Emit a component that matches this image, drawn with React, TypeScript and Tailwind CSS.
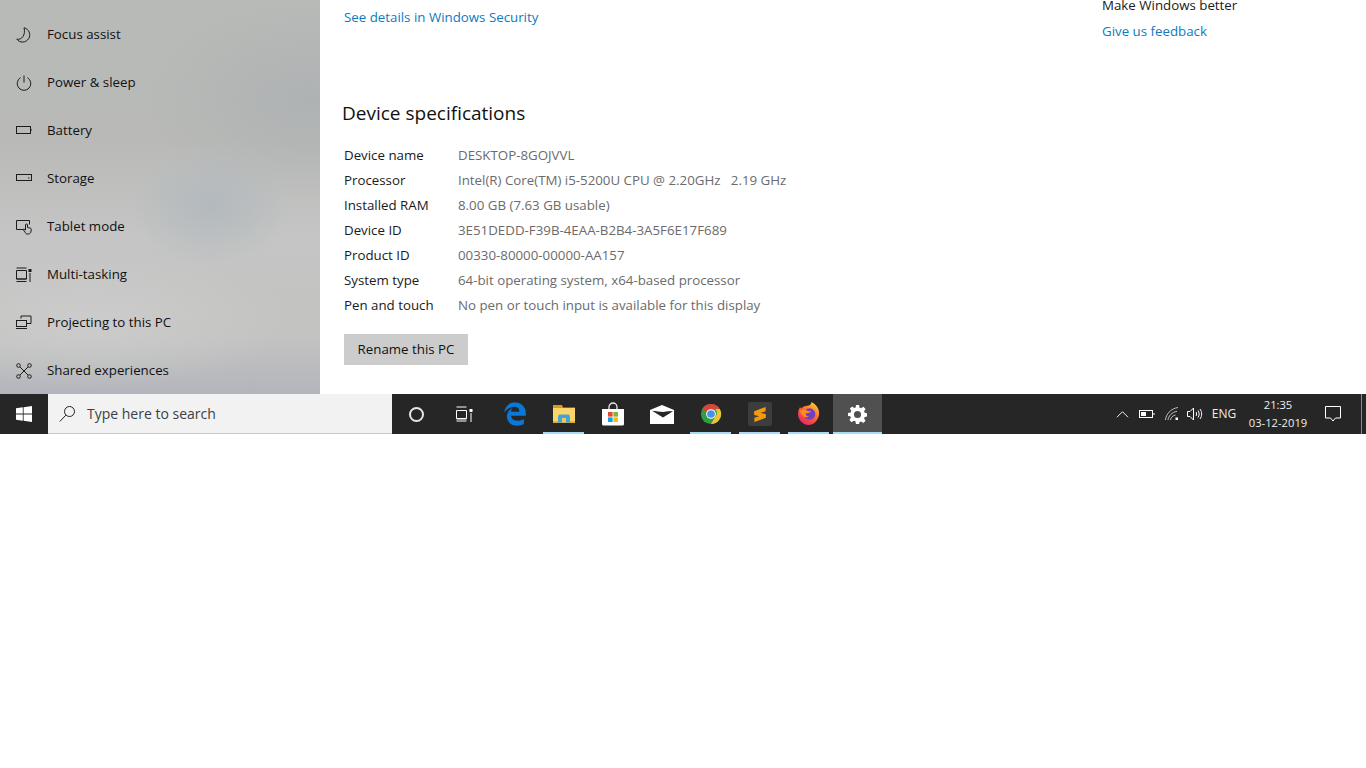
import { type ReactNode } from "react";
import { FaEdgeLegacy } from "react-icons/fa6";

const font = "font-['Open_Sans','Noto_Sans',sans-serif]";

const NavIcons: Record<string, ReactNode> = {
  focus: <path d="M8 0.800A7.200 7.200 0 1 1 0.800 12.200C5.500 13.300 10 8 8 0.800z" />,
  power: (
    <>
      <path d="M4.500 2.700a6.800 6.800 0 1 0 7 0" />
      <path d="M8 0.500v7" />
    </>
  ),
  battery: (
    <>
      <rect x="0.500" y="3.500" width="14" height="7" />
      <path d="M15 6v2" />
    </>
  ),
  storage: (
    <>
      <rect x="0.500" y="3.500" width="15" height="6" />
      <path d="M12 7h1.500" />
    </>
  ),
  tablet: (
    <>
      <path d="M7 10.500H0.500v-9h13v4" />
      <path d="M9 13l-2-2.500 1-.5 1.500 1V6a1 1 0 0 1 2 0v2.500l3 .7c.6.2.9.7.8 1.300l-.5 2.700c-.4 1.200-1.400 1.800-2.600 1.800h-1.200C9.900 15 9.500 14 9 13z" />
    </>
  ),
  multi: (
    <>
      <path d="M0.500 1h10M0.500 14.500h10M0.500 12h10M0.500 3.500h10v8.500h-10z" />
      <path d="M14 6v9" />
      <rect x="13" y="2.500" width="2" height="2" fill="currentColor" />
    </>
  ),
  project: (
    <>
      <path d="M5 3.500V1h10v7.500h-4.500" />
      <rect x="0.500" y="5.500" width="10" height="6" />
      <path d="M0 13.500h11" />
    </>
  ),
  shared: (
    <>
      <circle cx="2.500" cy="2.500" r="1.800" />
      <circle cx="13.500" cy="2.500" r="1.800" />
      <circle cx="2.500" cy="13.500" r="1.800" />
      <circle cx="13.500" cy="13.500" r="1.800" />
      <path d="M4 4c2.500 2.500 5.500 5.500 8 8M12 4c-2.500 2.500-5.500 5.500-8 8" />
    </>
  ),
};

const navItems = [
  { key: "focus", label: "Focus assist" },
  { key: "power", label: "Power & sleep" },
  { key: "battery", label: "Battery" },
  { key: "storage", label: "Storage" },
  { key: "tablet", label: "Tablet mode" },
  { key: "multi", label: "Multi-tasking" },
  { key: "project", label: "Projecting to this PC" },
  { key: "shared", label: "Shared experiences" },
];

const specs = [
  ["Device name", "DESKTOP-8GOJVVL"],
  ["Processor", "Intel(R) Core(TM) i5-5200U CPU @ 2.20GHz   2.19 GHz"],
  ["Installed RAM", "8.00 GB (7.63 GB usable)"],
  ["Device ID", "3E51DEDD-F39B-4EAA-B2B4-3A5F6E17F689"],
  ["Product ID", "00330-80000-00000-AA157"],
  ["System type", "64-bit operating system, x64-based processor"],
  ["Pen and touch", "No pen or touch input is available for this display"],
];

function Sidebar() {
  return (
    <aside className="w-[320px] shrink-0 overflow-hidden pt-[11px] bg-[radial-gradient(ellipse_80px_60px_at_210px_205px,#b3b9be,transparent),radial-gradient(ellipse_170px_100px_at_310px_100px,#afb2b3,transparent),radial-gradient(ellipse_200px_70px_at_90px_320px,#cbcccb,transparent),linear-gradient(180deg,#b8bab8_0%,#b9bab7_35%,#c4c5c4_60%,#c3c3c1_85%,#b4b5bc_100%)]">
      {navItems.map((item) => (
        <div key={item.key} className="flex h-12 items-center pl-4">
          <svg viewBox="0 0 16 16" fill="none" stroke="currentColor" strokeWidth="1" className="h-4 w-4 text-[#1c1c1c]">
            {NavIcons[item.key]}
          </svg>
          <span className="ml-[15px] text-[13.300px] text-[#111]">{item.label}</span>
        </div>
      ))}
    </aside>
  );
}

function Content() {
  return (
    <main className="flex min-w-0 flex-1 overflow-hidden bg-white">
      <section className="flex-1 pl-6 pt-[7px]">
        <a className="block h-5 text-[13.300px] leading-5 text-[#0c7cc0]">See details in Windows Security</a>
        <h2 className="-ml-[2px] mt-[72px] h-7 text-[19px] leading-7 text-[#111]">Device specifications</h2>
        <dl className="mt-[16px]">
          {specs.map(([k, v]) => (
            <div key={k} className="flex h-[25px] items-center text-[13.300px]">
              <dt className="w-[114px] text-[#1a1a1a]">{k}</dt>
              <dd className="whitespace-pre text-[#6b6b6b]">{v}</dd>
            </div>
          ))}
        </dl>
        <button className="mt-[16px] flex h-[31px] w-[124px] items-center justify-center bg-[#cccccc] text-[13.300px] text-[#111]">
          Rename this PC
        </button>
      </section>
      <section className="-mt-[5px] w-[264px] shrink-0 text-[13.300px] leading-5">
        <p className="text-[#1a1a1a]">Make Windows better</p>
        <a className="mt-[6px] block text-[#0c7cc0]">Give us feedback</a>
      </section>
    </main>
  );
}

function WinLogo() {
  return (
    <svg viewBox="0 0 16 16" className="h-4 w-4 fill-white">
      <path d="M0 2.300 6.800 1.300v6.300H0zM7.600 1.200 16 0v7.600H7.600zM0 8.400h6.800v6.300L0 13.700zM7.600 8.400H16V16l-8.400-1.200z" />
    </svg>
  );
}

function Explorer() {
  return (
    <svg viewBox="0 0 22 18" className="h-[18px] w-[22px]">
      <path d="M0 0h9l1 2.500h12V5H0z" fill="#d89b1d" />
      <rect y="3" width="22" height="15" fill="#fbd568" />
      <rect y="16" width="22" height="2" fill="#e2ae35" />
      <path d="M5 17.500V11.500a2 2 0 0 1 2-2h8a2 2 0 0 1 2 2v6z" fill="#3fa4e0" />
      <rect x="9" y="13" width="4" height="4.500" fill="#f5c94d" />
    </svg>
  );
}

function Store() {
  return (
    <svg viewBox="0 0 24 24" className="h-6 w-6">
      <path d="M8 8V5a4 4 0 0 1 8 0v3" fill="none" stroke="#e8e8e8" strokeWidth="1.300" />
      <path d="M1 7h22v15a1.500 1.500 0 0 1-1.500 1.500h-19A1.500 1.500 0 0 1 1 22z" fill="#fff" />
      <rect x="7" y="10" width="4.600" height="4.600" fill="#e8482c" />
      <rect x="12.400" y="10" width="4.600" height="4.600" fill="#7eb92a" />
      <rect x="7" y="15.400" width="4.600" height="4.600" fill="#0ba2e3" />
      <rect x="12.400" y="15.400" width="4.600" height="4.600" fill="#fcb813" />
    </svg>
  );
}

function Mail() {
  return (
    <svg viewBox="0 0 24 19" className="h-[19px] w-6">
      <path d="M0 5 12 0l12 5v14H0z" fill="#fff" />
      <path d="M2 5.800 23 6.200 13 12.500z" fill="#262626" />
      <path d="M2 5.500 12 1.500l10 4-9 1.500L8 6.500z" fill="#fff" />
    </svg>
  );
}

function Chrome() {
  return (
    <svg viewBox="0 0 24 24" className="h-[22px] w-[22px]">
      <circle cx="12" cy="12" r="11" fill="#2f9e44" />
      <path d="M12 1a11 11 0 0 1 9.530 5.500H12A5.500 5.500 0 0 0 7 9.700L2.500 6.500A11 11 0 0 1 12 1z" fill="#d9453a" />
      <path d="M21.530 6.500A11 11 0 0 1 12 23l4.700-8.300a5.500 5.500 0 0 0 0-8.200z" fill="#f3c32d" />
      <circle cx="12" cy="12" r="5.300" fill="#fff" />
      <circle cx="12" cy="12" r="4.200" fill="#4a8fe8" />
    </svg>
  );
}

function Sublime() {
  return (
    <span className="flex h-6 w-6 items-center justify-center rounded-[2px] bg-[#3d3d3d]">
      <svg viewBox="0 0 14 16" className="h-[15px] w-[14px] fill-[#f59a0c]">
        <path d="M13 0v4.500L1 8.500V4.500z" />
        <path d="M13 7.500v4L1 16v-4.500z" />
        <path d="M1 4.500v4l12 3V7.500z" />
      </svg>
    </span>
  );
}

function Firefox() {
  return (
    <svg viewBox="0 0 24 24" className="h-6 w-6">
      <defs>
        <linearGradient id="ffa" x1="0.800" y1="0" x2="0.200" y2="1">
          <stop offset="0" stopColor="#ffd23a" />
          <stop offset="0.450" stopColor="#ff6b2c" />
          <stop offset="1" stopColor="#e3206e" />
        </linearGradient>
      </defs>
      <path d="M14.500 0c3 1.600 5 3.500 6.300 6 1.600 3 1.800 6.500.5 9.500-1.700 4.500-5.500 7.500-9.800 7.500C6 23 1 18 1 12c0-2 .5-3.800 1.300-5.200l.8-2c.3 1 .7 1.500 1.300 1.800C5.500 4.800 7 4 9 3.900 11.500 3.800 14.500 3 14.500 0z" fill="url(#ffa)" />
      <circle cx="12.500" cy="12" r="5.800" fill="#6f3fc4" />
      <path d="M3 9c2-1.500 5-2 7-.5 1.300 1 3 .8 4 0-.5 2.200-3 3-5 2.500-.8 1.800.5 3.500 3 3.800-3.500 1.500-7.500-.5-8-3.500z" fill="#ff8a1e" />
    </svg>
  );
}

function Gear() {
  return (
    <svg viewBox="0 0 24 24" className="h-[19px] w-[19px] fill-white">
      <path fillRule="evenodd" d="M10 0h4l.6 3.400 2 .8L19.400 2.300l2.800 2.800-1.900 2.800.8 2 3.400.6v4l-3.400.6-.8 2 1.900 2.800-2.800 2.800-2.800-1.900-2 .8L14 24h-4l-.6-3.400-2-.8-2.800 1.900-2.800-2.800 1.900-2.800-.8-2L0 14v-4l3.400-.6.8-2-1.900-2.800 2.800-2.800 2.800 1.900 2-.8zM12 7.500a4.500 4.500 0 1 0 0 9 4.500 4.500 0 0 0 0-9z" />
    </svg>
  );
}

const pinned: { icon: ReactNode; open?: boolean; active?: boolean }[] = [
  { icon: <FaEdgeLegacy className="h-6 w-6 text-[#0a78d7]" /> },
  { icon: <Explorer />, open: true },
  { icon: <Store /> },
  { icon: <Mail /> },
  { icon: <Chrome />, open: true },
  { icon: <Sublime />, open: true },
  { icon: <Firefox />, open: true },
  { icon: <Gear />, open: true, active: true },
];

function Tray() {
  return (
    <div className="ml-auto flex h-full items-center text-white">
      <span className="flex w-[24px] justify-center">
        <svg viewBox="0 0 14 8" fill="none" stroke="currentColor" className="h-2 w-[13px]">
          <path d="M1 7.500 7 1.500l6 6" />
        </svg>
      </span>
      <span className="flex w-[26px] justify-center">
        <svg viewBox="0 0 16 10" fill="none" stroke="currentColor" className="h-[10px] w-4">
          <rect x="0.500" y="1.500" width="13" height="7" />
          <rect x="2" y="3" width="5" height="4" fill="currentColor" stroke="none" />
          <path d="M15 4v2" />
        </svg>
      </span>
      <span className="flex w-[24px] justify-center">
        <svg viewBox="0 0 14 14" fill="none" stroke="#cfcfcf" strokeWidth="0.900" className="h-[14px] w-[14px]">
          <path d="M0.500 13C1 7 6 1.500 13 0.500M3 13c.5-4 4-8 9-8.700M5.500 13c.3-2.400 2.200-4.500 5-5" />
          <rect x="10.500" y="10.500" width="2.500" height="2.500" fill="#fff" stroke="none" />
        </svg>
      </span>
      <span className="flex w-[22px] justify-center">
        <svg viewBox="0 0 16 14" fill="none" stroke="currentColor" className="h-[14px] w-4">
          <path d="M0.500 4.500h2.500L6.500 1v12L3 9.500H0.500z" />
          <path d="M9 5c.8 1.200.8 2.800 0 4M11 3.500c1.500 2 1.500 5 0 7M13 2c2.200 3 2.200 7 0 10" />
        </svg>
      </span>
      <span className="ml-[1px] w-[34px] text-center text-[12px] text-[#eee]">ENG</span>
      <span className="ml-[2px] flex w-[70px] flex-col items-center text-[11.200px] leading-[18px] text-[#eee]">
        <span>21:35</span>
        <span>03-12-2019</span>
      </span>
      <span className="flex w-[40px] justify-center">
        <svg viewBox="0 0 16 16" fill="none" stroke="currentColor" className="h-4 w-4">
          <path d="M0.500 0.500h15v11.500H10.500L8 15l-2.500-3H0.500z" />
        </svg>
      </span>
      <span className="ml-[8px] mr-[4px] h-full w-px bg-[#8a8a8a]" />
    </div>
  );
}

function Taskbar() {
  return (
    <footer className="flex h-10 items-stretch bg-[#262626]">
      <div className="flex w-12 shrink-0 items-center justify-center">
        <WinLogo />
      </div>
      <div className="flex w-[344px] shrink-0 items-center border-b border-[#c9c9c9] bg-[#f2f2f2] pl-[11px]">
        <svg viewBox="0 0 16 16" fill="none" stroke="#222" className="mt-px h-4 w-4 shrink-0">
          <circle cx="10.500" cy="5.500" r="5" />
          <path d="M6.800 9.200 0.800 15.500" />
        </svg>
        <span className="ml-[12px] text-[14px] text-[#3a3f45]">Type here to search</span>
      </div>
      <div className="flex w-12 items-center justify-center">
        <span className="h-[15px] w-[15px] rounded-full border-2 border-[#e6e6e6]" />
      </div>
      <div className="flex w-12 items-center justify-center">
        <svg viewBox="0 0 17 16" fill="none" stroke="#fff" className="h-4 w-[17px]">
          <path d="M0.500 1h10M0.500 15h10M0.500 13h10M0.500 4.500h10v8h-10z" />
          <path d="M15 7v9" />
          <rect x="13.500" y="3" width="3" height="3" fill="#fff" stroke="none" />
        </svg>
      </div>
      <div className="ml-[2px] flex">
        {pinned.map((p, i) => (
          <div key={i} className={`relative flex w-[49px] items-center justify-center ${p.active ? "bg-[#505050]" : ""}`}>
            {p.icon}
            {p.open && (
              <span className={`absolute bottom-0 h-[2px] bg-[#a6dcf7] ${p.active ? "inset-x-0" : "inset-x-[4px]"}`} />
            )}
          </div>
        ))}
      </div>
      <Tray />
    </footer>
  );
}

export default function App() {
  return (
    <div className={`h-[768px] w-[1366px] overflow-hidden bg-white ${font}`}>
      <div className="flex h-[394px]">
        <Sidebar />
        <Content />
      </div>
      <Taskbar />
    </div>
  );
}
